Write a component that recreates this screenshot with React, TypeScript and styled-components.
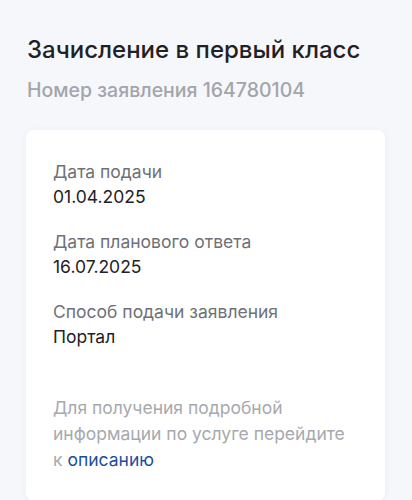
import React from "react";
import styled, { createGlobalStyle } from "styled-components";

const GlobalStyle = createGlobalStyle`
  html, body {
    margin: 0;
    padding: 0;
    background: #f6f7fb;
    font-family: Inter, "Noto Sans", sans-serif;
  }
`;

const Page = styled.div`
  padding: 34px 27px 0 26px;
  min-height: 500px;
  box-sizing: border-box;
`;

const Title = styled.h1`
  margin: 0 0 0 1px;
  font-size: 24px;
  line-height: 32px;
  font-weight: 500;
  color: #1f2126;
`;

const Subtitle = styled.div`
  margin: 11px 0 0 1px;
  font-size: 19.5px;
  line-height: 26px;
  font-weight: 500;
  color: #a2a5ab;
`;

const Card = styled.div`
  margin-top: 27px;
  background: #ffffff;
  border-radius: 8px;
  box-shadow: 0 1px 6px rgba(40, 60, 120, 0.06);
  padding: 29px 27px 28px;
  display: flex;
  flex-direction: column;
  gap: 20px;
`;

const Field = styled.div`
  display: flex;
  flex-direction: column;
`;

const Label = styled.div`
  font-size: 17.5px;
  line-height: 25px;
  color: #6e7177;
`;

const Value = styled.div`
  font-size: 17.5px;
  line-height: 25px;
  color: #1f2126;
`;

const Info = styled.p`
  margin: 26px 0 0;
  font-size: 17.5px;
  line-height: 26px;
  color: #a6a9ae;
`;

const Link = styled.a`
  text-decoration: none;
  color: #1c4e9c;
`;

const fields = [
  { label: "Дата подачи", value: "01.04.2025" },
  { label: "Дата планового ответа", value: "16.07.2025" },
  { label: "Способ подачи заявления", value: "Портал" },
];

const App = () => (
  <>
    <GlobalStyle />
    <Page>
      <Title>Зачисление в первый класс</Title>
      <Subtitle>Номер заявления 164780104</Subtitle>
      <Card>
        {fields.map((f) => (
          <Field key={f.label}>
            <Label>{f.label}</Label>
            <Value>{f.value}</Value>
          </Field>
        ))}
        <Info>
          Для получения подробной информации по услуге перейдите к{" "}
          <Link href="#">описанию</Link>
        </Info>
      </Card>
    </Page>
  </>
);

export default App;
